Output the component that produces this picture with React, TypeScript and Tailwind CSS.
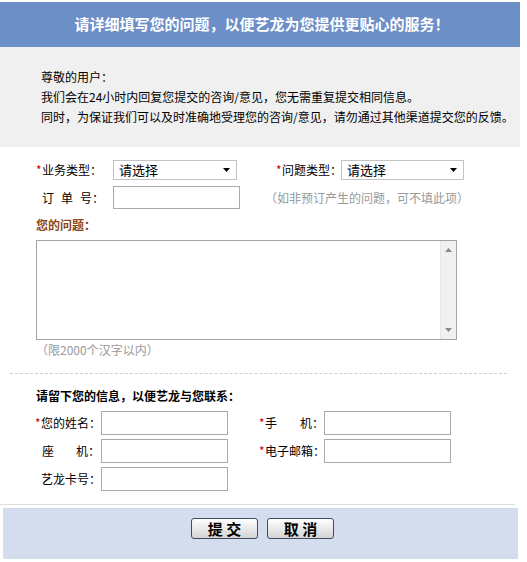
import React from "react";

const Star = () => (
  <span className="inline-block w-[6px] shrink-0 text-[#cc0000]">*</span>
);

const Select = ({ w }: { w: string }) => (
  <div
    className={`${w} shrink-0 h-[20px] border border-[#c3c3c3] bg-white flex items-center pl-[5px] pr-[6px] text-[13px] text-black`}
  >
    <span className="flex-1 leading-[18px]">请选择</span>
    <svg width="7" height="4" viewBox="0 0 7 4">
      <path d="M0 0 H7 L3.5 4 Z" fill="#000" />
    </svg>
  </div>
);

const Input = () => (
  <div className="w-[127px] shrink-0 h-[24px] border border-[#a7abae] bg-white" />
);

export default function App() {
  return (
    <div
      className="w-[527px] h-[562px] bg-white text-[12px] text-black"
      style={{ fontFamily: '"Noto Sans CJK SC", "Noto Sans", sans-serif' }}
    >
      <div className="w-[520px] pt-[2px]">
        <div className="h-[45px] bg-[#6d8fc8] flex items-center justify-center text-white font-bold text-[15px] pl-[4px]">
          请详细填写您的问题，以便艺龙为您提供更贴心的服务！
        </div>
        <div className="h-[100px] bg-[#f0f0f0] pt-[20px] pl-[41px] leading-[20px] whitespace-nowrap">
          <div>尊敬的用户：</div>
          <div>我们会在24小时内回复您提交的咨询/意见，您无需重复提交相同信息。</div>
          <div>同时，为保证我们可以及时准确地受理您的咨询/意见，请勿通过其他渠道提交您的反馈。</div>
        </div>

        <div className="pl-[36px] pt-[13px]">
          <div className="flex items-center h-[20px]">
            <div className="w-[77px] shrink-0 flex whitespace-nowrap">
              <Star />
              <span>业务类型：</span>
            </div>
            <Select w="w-[124px]" />
            <div className="ml-[39px] w-[65px] shrink-0 flex whitespace-nowrap">
              <Star />
              <span>问题类型：</span>
            </div>
            <Select w="w-[123px]" />
          </div>

          <div className="flex items-center h-[23px] mt-[6px]">
            <div className="w-[77px] shrink-0 pl-[6px] flex whitespace-nowrap">
              <span>订</span>
              <span className="ml-[7px]">单</span>
              <span className="ml-[7px]">号：</span>
            </div>
            <div className="w-[127px] shrink-0 h-[23px] border border-[#a7abae] bg-white" />
            <span className="ml-[25px] whitespace-nowrap text-[#999999]">（如非预订产生的问题，可不填此项）</span>
          </div>

          <div className="mt-[8px] leading-[16px] font-bold text-[#8a4516]">您的问题：</div>

          <div className="mt-[7px] w-[421px] h-[100px] border border-[#a3a3a3] bg-white flex">
            <textarea className="flex-1 resize-none outline-none bg-white" />
            <div className="w-[16px] bg-[#f0f0f0] border-l border-[#e6e6e6] flex flex-col items-center justify-between py-[7px]">
              <svg width="7" height="4" viewBox="0 0 7 4">
                <path d="M0 4 H7 L3.5 0 Z" fill="#8a8a8a" />
              </svg>
              <svg width="7" height="4" viewBox="0 0 7 4">
                <path d="M0 0 H7 L3.5 4 Z" fill="#8a8a8a" />
              </svg>
            </div>
          </div>

          <div className="mt-[2px] leading-[16px] text-[#999999]">（限2000个汉字以内）</div>
        </div>

        <div className="mt-[15px] ml-[10px] w-[497px] border-t border-dashed border-[#cfcfcf]" />

        <div className="pl-[36px]">
          <div className="mt-[14px] leading-[16px] font-bold">请留下您的信息，以便艺龙与您联系：</div>

          <div className="mt-[7px] flex flex-col gap-[4px]">
            <div className="flex items-center h-[24px]">
              <div className="w-[65px] shrink-0 flex justify-end whitespace-nowrap">
                <Star />
                <span>您的姓名：</span>
              </div>
              <Input />
              <div className="ml-[31px] w-[65px] shrink-0 flex whitespace-nowrap">
                <Star />
                <span>手</span>
                <span className="ml-[23px]">机：</span>
              </div>
              <Input />
            </div>
            <div className="flex items-center h-[24px]">
              <div className="w-[65px] shrink-0 flex pl-[6px] whitespace-nowrap">
                <span>座</span>
                <span className="ml-[22px]">机：</span>
              </div>
              <Input />
              <div className="ml-[31px] w-[65px] shrink-0 flex whitespace-nowrap">
                <Star />
                <span>电子邮箱：</span>
              </div>
              <Input />
            </div>
            <div className="flex items-center h-[24px]">
              <div className="w-[65px] shrink-0 flex pl-[5px] whitespace-nowrap">
                <span>艺龙卡号：</span>
              </div>
              <Input />
            </div>
          </div>
        </div>

        <div className="mt-[13px] w-[515px] border-t border-[#dddddd]" />

        <div className="mt-[3px] ml-[3px] w-[515px] h-[51px] bg-[#d3ddee] flex justify-center gap-[9px] pt-[10px] pl-[4px]">
          <button className="w-[67px] h-[21px] rounded-[3px] border border-[#3f4d63] bg-linear-to-b from-white to-[#d4d4d4] font-bold text-[15px] leading-[19px] text-black">
            提&nbsp;交
          </button>
          <button className="w-[67px] h-[21px] rounded-[3px] border border-[#3f4d63] bg-linear-to-b from-white to-[#d4d4d4] font-bold text-[15px] leading-[19px] text-black">
            取&nbsp;消
          </button>
        </div>
      </div>
    </div>
  );
}
